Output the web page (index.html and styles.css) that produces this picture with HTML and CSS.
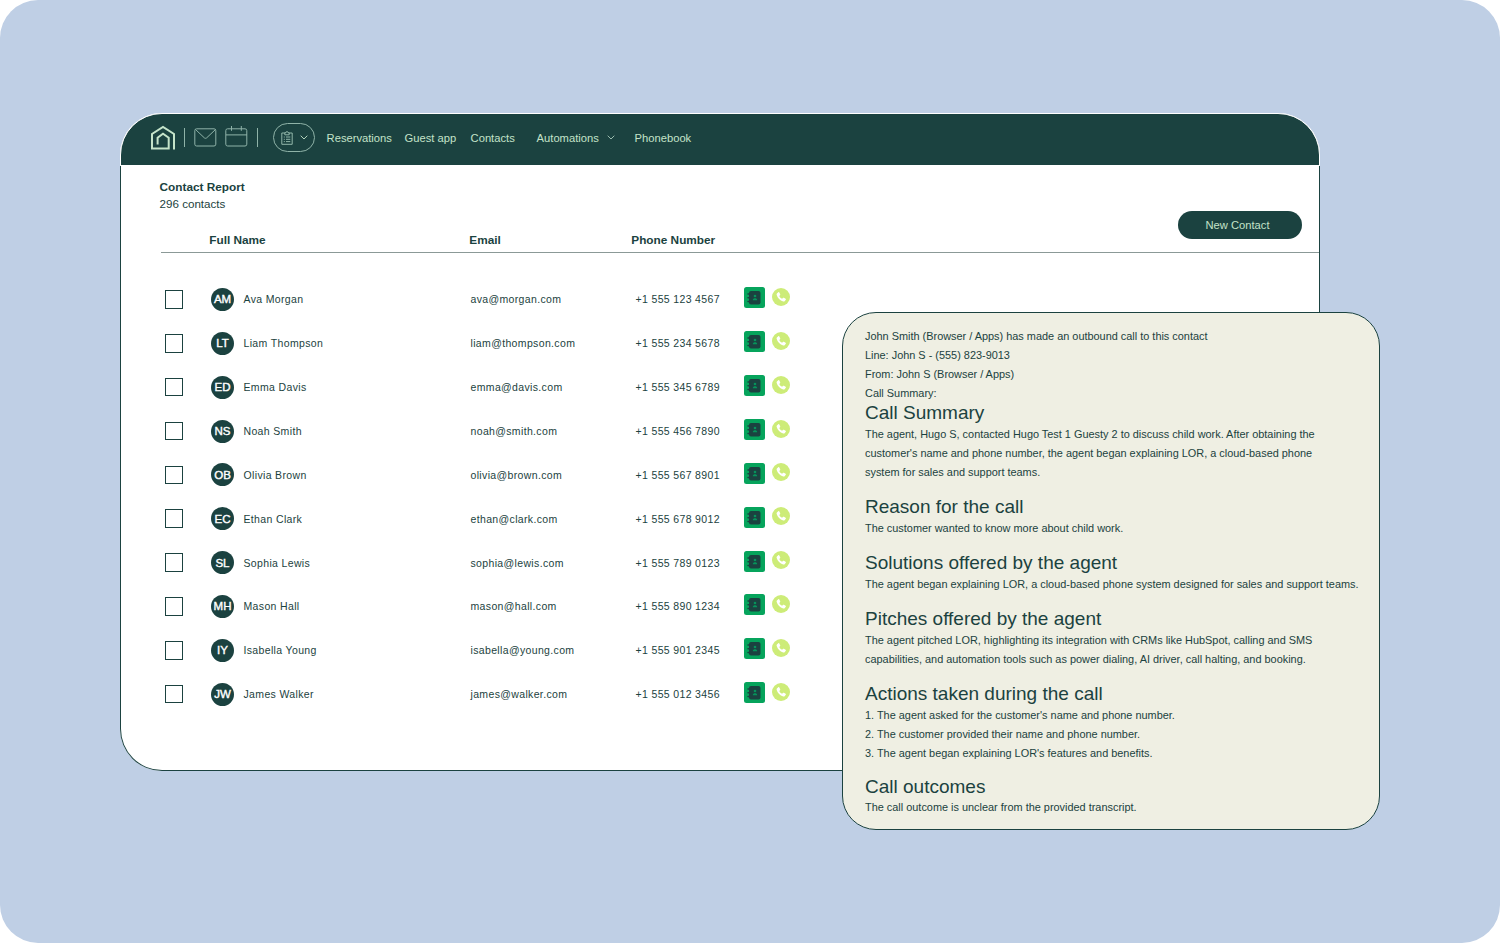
FILE: index.html
```
<!DOCTYPE html>
<html lang="en">
<head>
  <title>Contact Report</title>
  <meta charset="UTF-8">
  <link rel="stylesheet" href="styles.css">
</head>
<body>
  <svg class="sprite" aria-hidden="true">
    <symbol id="icon-book" viewBox="0 0 21 21">
      <rect width="21" height="21" rx="2.5" fill="#06a45c"/>
      <path d="M7 4h7.5a2 2 0 0 1 2 2v9.500a2 2 0 0 1-2 2H7a2 2 0 0 1-2-2V6a2 2 0 0 1 2-2z" fill="#1b4240"/>
      <path d="M4 7h2.500M4 10.700h2.500M4 14.400h2.500" stroke="#1b4240" stroke-width="1.500" stroke-linecap="round"/>
      <circle cx="11" cy="9" r="1.300" fill="#06925a"/>
      <path d="M8.800 13.200c0-2.600 4.400-2.600 4.400 0z" fill="#06925a"/>
    </symbol>
    <symbol id="icon-call" viewBox="0 0 18 18">
      <circle cx="9" cy="9" r="9" fill="#cdec78"/>
      <path d="M4.900 5.400l1.400-1.200c.4-.3.8-.2 1 .2l.9 1.800c.2.400.1.700-.2 1l-.7.700c.6 1.300 1.500 2.200 2.800 2.800l.8-.8c.3-.3.600-.3 1-.1l1.700 1c.4.200.5.600.2 1l-1 1.300c-.4.500-1 .6-1.600.4-3.300-1.100-5.500-3.300-6.500-6.500-.2-.6-.2-1.100.2-1.600z" fill="#fff"/>
    </symbol>
  </svg>

  <div class="scene">
    <div class="window">
      <div class="navbar">
        <svg class="logo" width="26" height="26" viewBox="0 0 26 26" fill="none" stroke="#c4e3c9" stroke-width="2">
          <path d="M24 24.500V9L13 2 2 9v14.500h16.700V12.700L13 8.700l-5.400 4v6.800"/>
        </svg>
        <div class="divider divider-left"></div>
        <svg class="mail" width="23" height="19" viewBox="0 0 23 19" fill="none" stroke="#8fb3a8">
          <rect x=".8" y=".8" width="21" height="17.200" rx="1.800"/>
          <path d="M1.500 1.500l8.800 8.300c.8.700 1.600.7 2.400 0l8.800-8.300"/>
        </svg>
        <svg class="calendar" width="23" height="21" viewBox="0 0 23 21" fill="none" stroke="#8fb3a8">
          <rect x=".8" y="2.800" width="21" height="17.200" rx="1.800"/>
          <path d="M1 8.900h21M6.500 0v4.800M16.300 0v4.800"/>
        </svg>
        <div class="divider divider-right"></div>
        <div class="switcher">
          <svg width="12" height="14" viewBox="0 0 12 14" fill="none" stroke="#9fc4b5" stroke-width=".9">
            <path d="M3.800 2H.8v11.300h10.400V2H8.200M3.800 3.800V1.700h1.100a1.100 1.100 0 0 1 2.200 0h1.100v2.100z"/>
            <path d="M2.800 6h1M5 6h4.300M2.800 8.300h1M5 8.300h4.300M2.800 10.600h1M5 10.600h4.300"/>
          </svg>
          <svg width="8" height="5" viewBox="0 0 8 5" fill="none" stroke="#c4e3c9" stroke-width=".9">
            <path d="M.7.700L4 4 7.300.700"/>
          </svg>
        </div>
        <nav class="menu">
          <span class="item-reservations">Reservations</span>
          <span class="item-guest">Guest app</span>
          <span class="item-contacts">Contacts</span>
          <span class="item-automations">Automations
            <svg width="8" height="5" viewBox="0 0 8 5" fill="none" stroke="#a9cbbb" stroke-width=".9">
              <path d="M.7.700L4 4 7.300.700"/>
            </svg>
          </span>
          <span>Phonebook</span>
        </nav>
      </div>

      <div class="report">
        <div class="report-header">
          <div class="report-title">
            <h1>Contact Report</h1>
            <p>296 contacts</p>
          </div>
          <button class="new-contact">New Contact</button>
        </div>
        <div class="columns">
          <span>Full Name</span>
          <span>Email</span>
          <span>Phone Number</span>
        </div>
        <div class="rows" id="rows"></div>
      </div>
    </div>

    <div class="summary">
      <p>John Smith (Browser / Apps) has made an outbound call to this contact</p>
      <p>Line: John S - (555) 823-9013</p>
      <p>From: John S (Browser / Apps)</p>
      <p>Call Summary:</p>
      <h2 class="first">Call Summary</h2>
      <p>The agent, Hugo S, contacted Hugo Test 1 Guesty 2 to discuss child work. After obtaining the<br>customer's name and phone number, the agent began explaining LOR, a cloud-based phone<br>system for sales and support teams.</p>
      <h2>Reason for the call</h2>
      <p>The customer wanted to know more about child work.</p>
      <h2>Solutions offered by the agent</h2>
      <p>The agent began explaining LOR, a cloud-based phone system designed for sales and support teams.</p>
      <h2>Pitches offered by the agent</h2>
      <p>The agent pitched LOR, highlighting its integration with CRMs like HubSpot, calling and SMS<br>capabilities, and automation tools such as power dialing, AI driver, call halting, and booking.</p>
      <h2>Actions taken during the call</h2>
      <p>1. The agent asked for the customer's name and phone number.</p>
      <p>2. The customer provided their name and phone number.</p>
      <p>3. The agent began explaining LOR's features and benefits.</p>
      <h2 class="last">Call outcomes</h2>
      <p>The call outcome is unclear from the provided transcript.</p>
    </div>
  </div>

  <script src="contacts.js"></script>
</body>
</html>
```
FILE: styles.css
```
:root {
  --dark: #1b4240;
  --mint: #c4e3c9;
  --sky: #bfcfe5;
  --cream: #efefe3;
}

* {
  box-sizing: border-box;
}

body {
  margin: 0;
  background: #fff;
  color: var(--dark);
  font-family: "Liberation Sans", Arial, sans-serif;
}

h1, h2, p {
  margin: 0;
}

.sprite {
  display: none;
}

.scene {
  position: relative;
  width: 1500px;
  height: 943px;
  padding: 113px 180px 0 120px;
  background: var(--sky);
  border-radius: 38px;
  overflow: hidden;
}

.window {
  width: 1200px;
  height: 658px;
  display: flex;
  flex-direction: column;
  background: #fff;
  border-radius: 42px;
}

.navbar {
  height: 53px;
  display: flex;
  align-items: center;
  padding: 0 0 4px 29px;
  background: var(--dark);
  border: 1px solid #fff;
  border-radius: 42px 42px 0 0;
}

.divider {
  width: 1px;
  height: 19px;
  background: #8fb3a8;
}

.divider-left {
  margin: 0 9px 0 8px;
}

.divider-right {
  margin: 0 15px 0 9px;
}

.calendar {
  margin: 0 0 2px 8px;
}

.switcher {
  width: 42px;
  height: 29px;
  display: flex;
  align-items: center;
  gap: 7px;
  padding-left: 7px;
  border: 1px solid #8fb3a8;
  border-radius: 15px;
}

.menu {
  display: flex;
  margin-left: 11.600px;
  font-size: 11.2px;
  line-height: 16px;
  color: var(--mint);
}

.item-reservations {
  width: 78px;
}

.item-guest {
  width: 66px;
}

.item-contacts {
  width: 66px;
}

.item-automations {
  width: 98px;
}

.item-automations svg {
  margin: 0 0 2px 5px;
}

.report {
  flex: 1;
  border: 1px solid var(--dark);
  border-top: none;
  border-radius: 0 0 42px 42px;
}

.report-header {
  height: 62px;
  display: flex;
  justify-content: space-between;
  padding: 13px 17px 0 38.600px;
}

.report-title h1 {
  font-size: 11.8px;
  line-height: 17px;
}

.report-title p {
  font-size: 11.6px;
  line-height: 16px;
}

.new-contact {
  width: 124px;
  height: 28px;
  margin-top: 32px;
  padding: 0 5px 0 0;
  border: none;
  border-radius: 14px;
  background: var(--dark);
  color: var(--mint);
  font: 11.2px "Liberation Sans", Arial, sans-serif;
}

.columns {
  height: 25px;
  display: grid;
  grid-template-columns: 260px 162px 1fr;
  margin-left: 40px;
  padding: 3px 0 0 48.300px;
  border-bottom: 1px solid #8b9997;
  font-size: 11.8px;
  font-weight: bold;
  line-height: 18px;
}

.rows {
  padding: 24.500px 0 0 43.500px;
}

.row {
  height: 43.870px;
  display: grid;
  grid-template-columns: 46.500px 32.500px 227px 165px 108px 28.500px 18px;
  align-items: center;
  font-size: 10.500px;
  letter-spacing: 0.350px;
}

.checkbox {
  width: 18.500px;
  height: 18.500px;
  border: 1px solid var(--dark);
}

.avatar {
  width: 23px;
  height: 23px;
  display: flex;
  align-items: center;
  justify-content: center;
  border-radius: 50%;
  background: var(--dark);
  color: #fff;
  font-size: 11.500px;
  letter-spacing: 0;
  -webkit-text-stroke: 0.400px #fff;
}

.row svg {
  display: block;
  margin-bottom: 3px;
}

.row svg:last-child {
  margin-bottom: 5px;
}

/* call summary card, laid over the window's corner */
.summary {
  position: absolute;
  left: 842px;
  top: 312px;
  width: 538px;
  height: 518px;
  padding: 14.400px 0 0 22px;
  background: var(--cream);
  border: 1px solid var(--dark);
  border-radius: 34px;
  white-space: nowrap;
}

.summary p {
  font-size: 10.920px;
  line-height: 18.850px;
}

.summary h2 {
  margin-top: 13.300px;
  font-size: 19px;
  font-weight: normal;
  line-height: 24px;
}

.summary h2.first {
  margin-top: -1.500px;
}

.summary h2.last {
  margin: 12.300px 0 -1px;
}
```
FILE: contacts.js
```
const contacts = [
  ['AM', 'Ava Morgan', 'ava@morgan.com', '+1 555 123 4567'],
  ['LT', 'Liam Thompson', 'liam@thompson.com', '+1 555 234 5678'],
  ['ED', 'Emma Davis', 'emma@davis.com', '+1 555 345 6789'],
  ['NS', 'Noah Smith', 'noah@smith.com', '+1 555 456 7890'],
  ['OB', 'Olivia Brown', 'olivia@brown.com', '+1 555 567 8901'],
  ['EC', 'Ethan Clark', 'ethan@clark.com', '+1 555 678 9012'],
  ['SL', 'Sophia Lewis', 'sophia@lewis.com', '+1 555 789 0123'],
  ['MH', 'Mason Hall', 'mason@hall.com', '+1 555 890 1234'],
  ['IY', 'Isabella Young', 'isabella@young.com', '+1 555 901 2345'],
  ['JW', 'James Walker', 'james@walker.com', '+1 555 012 3456']
];

document.getElementById('rows').innerHTML = contacts.map(([initials, name, email, phone]) => `
  <div class="row">
    <span class="checkbox"></span>
    <span class="avatar">${initials}</span>
    <span>${name}</span>
    <span>${email}</span>
    <span>${phone}</span>
    <svg width="21" height="21"><use href="#icon-book"/></svg>
    <svg width="18" height="18"><use href="#icon-call"/></svg>
  </div>`).join('');
```
